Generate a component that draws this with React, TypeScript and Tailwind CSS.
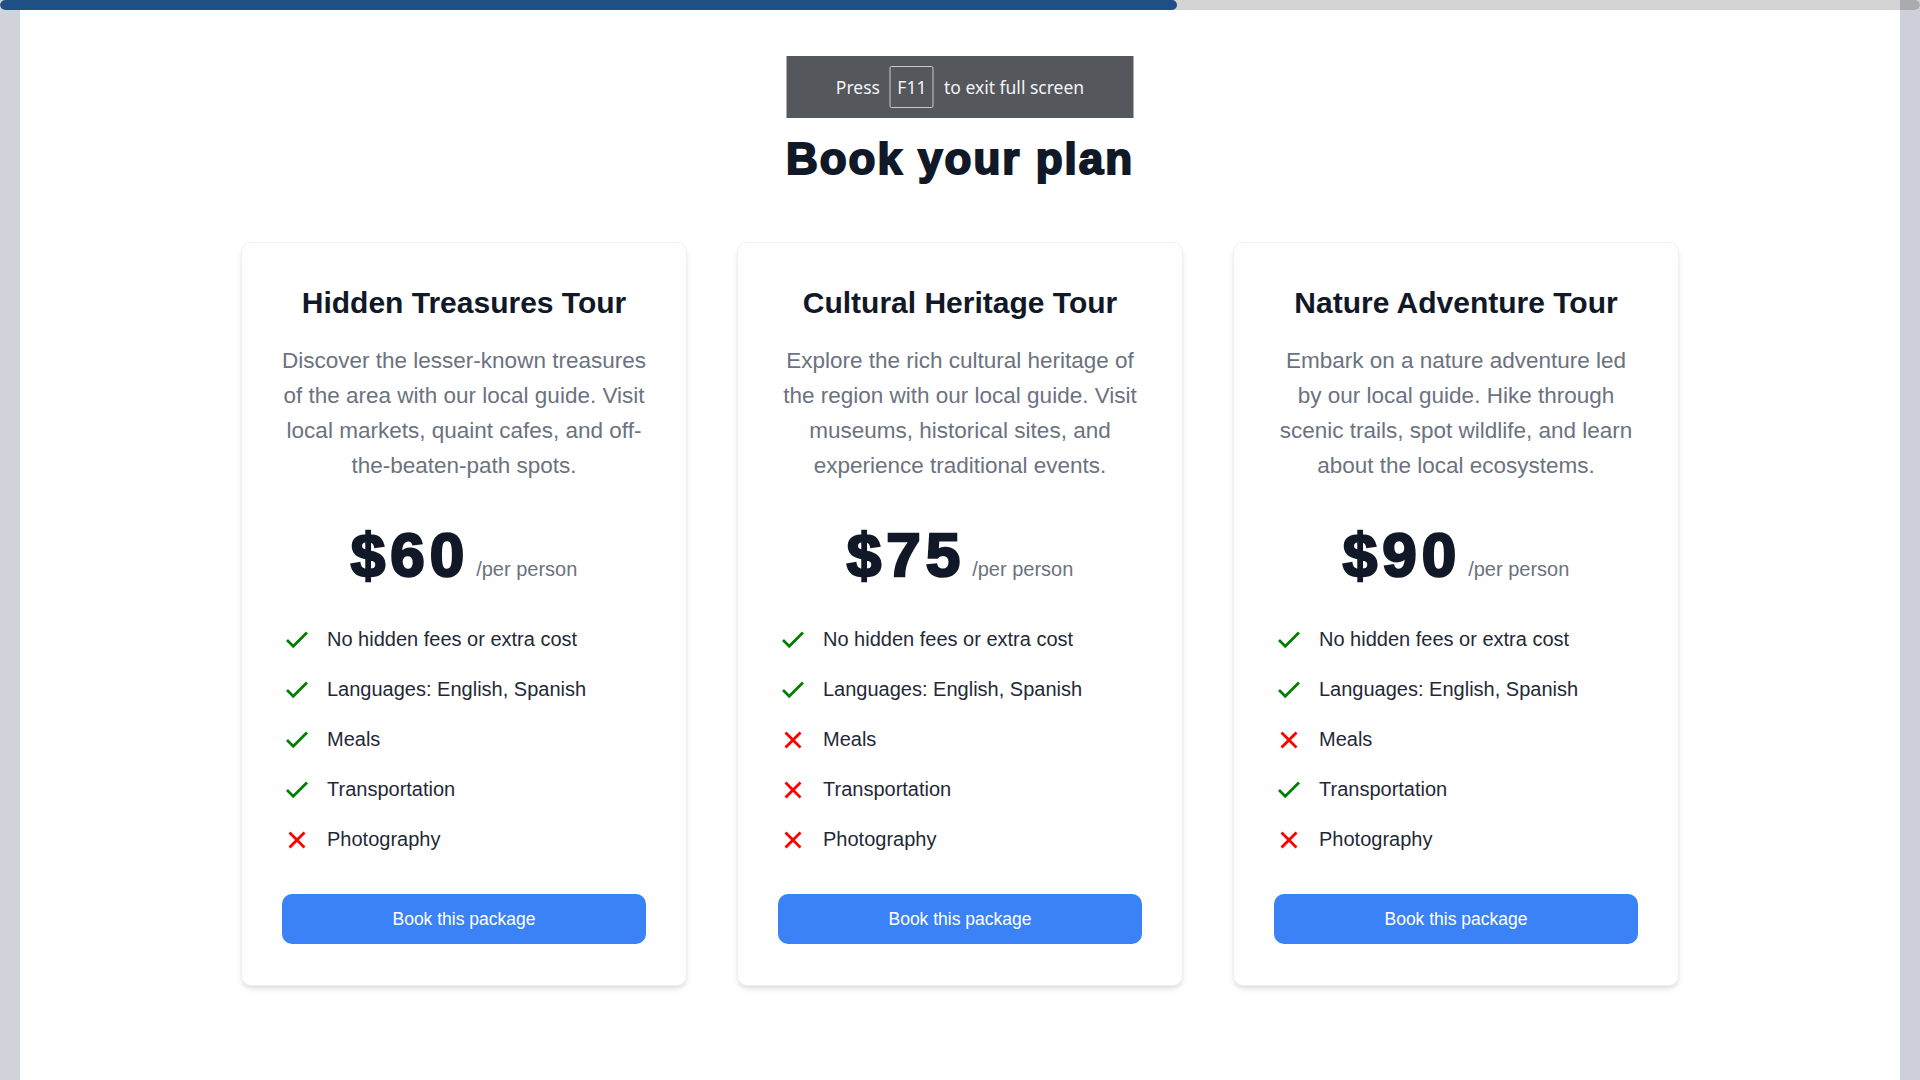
import React from "react";

type Feature = { label: string; ok: boolean };
type Plan = { title: string; desc: string; price: string; features: Feature[] };

const plans: Plan[] = [
  {
    title: "Hidden Treasures Tour",
    desc: "Discover the lesser-known treasures of the area with our local guide. Visit local markets, quaint cafes, and off-the-beaten-path spots.",
    price: "$60",
    features: [
      { label: "No hidden fees or extra cost", ok: true },
      { label: "Languages: English, Spanish", ok: true },
      { label: "Meals", ok: true },
      { label: "Transportation", ok: true },
      { label: "Photography", ok: false },
    ],
  },
  {
    title: "Cultural Heritage Tour",
    desc: "Explore the rich cultural heritage of the region with our local guide. Visit museums, historical sites, and experience traditional events.",
    price: "$75",
    features: [
      { label: "No hidden fees or extra cost", ok: true },
      { label: "Languages: English, Spanish", ok: true },
      { label: "Meals", ok: false },
      { label: "Transportation", ok: false },
      { label: "Photography", ok: false },
    ],
  },
  {
    title: "Nature Adventure Tour",
    desc: "Embark on a nature adventure led by our local guide. Hike through scenic trails, spot wildlife, and learn about the local ecosystems.",
    price: "$90",
    features: [
      { label: "No hidden fees or extra cost", ok: true },
      { label: "Languages: English, Spanish", ok: true },
      { label: "Meals", ok: false },
      { label: "Transportation", ok: true },
      { label: "Photography", ok: false },
    ],
  },
];

function CheckIcon() {
  return (
    <svg viewBox="0 0 24 24" className="w-[30px] h-[30px] shrink-0" fill="none" stroke="#008000" strokeWidth={2.2} strokeLinecap="butt" strokeLinejoin="miter">
      <path d="M20 6 9 17l-5-5" />
    </svg>
  );
}

function XIcon() {
  return (
    <svg viewBox="0 0 24 24" className="w-[30px] h-[30px] shrink-0" fill="none" stroke="#ff0000" strokeWidth={2.2} strokeLinecap="butt">
      <path d="M18 6 6 18" />
      <path d="m6 6 12 12" />
    </svg>
  );
}

function Card({ plan }: { plan: Plan }) {
  return (
    <div className="w-[446px] bg-white rounded-[10px] border border-[#f1f1f1] shadow-md p-[40px] flex flex-col">
      <h3 className="text-[30px] leading-[40px] font-bold text-[#111827] text-center">{plan.title}</h3>
      <p className="mt-[20px] text-[22.5px] leading-[35px] text-[#6b7280] text-center">{plan.desc}</p>
      <div className="mt-[42px] h-[60px] flex items-baseline justify-center">
        <span className="text-[62px] leading-[60px] font-bold text-[#111827] tracking-[5px] [-webkit-text-stroke:2.5px_#111827]">
          {plan.price}
        </span>
        <span className="ml-[7px] text-[20px] text-[#6b7280]">/per person</span>
      </div>
      <ul className="mt-[37px] flex flex-col gap-[15px]">
        {plan.features.map((f) => (
          <li key={f.label} className="flex items-center h-[35px] text-[20px] leading-[35px] text-[#1f2937]">
            {f.ok ? <CheckIcon /> : <XIcon />}
            <span className="ml-[15px]">{f.label}</span>
          </li>
        ))}
      </ul>
      <button className="mt-[37px] mb-[1px] h-[50px] w-full rounded-[10px] bg-[#3b82f6] text-white text-[17.5px]">
        Book this package
      </button>
    </div>
  );
}

export default function App() {
  return (
    <div className="relative w-full min-h-[1080px] flex bg-white font-['Liberation_Sans',Arial,sans-serif]">
      {/* top progress bar */}
      <div className="absolute top-0 left-0 right-0 h-[10px] z-20 rounded-full overflow-hidden bg-[#d4d4d4] flex">
        <div className="h-full w-[1177px] bg-[#1e4f85] rounded-full" />
        <div className="ml-auto h-full w-[20px] bg-[#a9abae] rounded-r-full" />
      </div>

      {/* left strip */}
      <div className="w-[20px] shrink-0 bg-[#d0d3da]" />

      {/* main */}
      <div className="relative flex-1 flex flex-col items-center pt-[137px]">
        {/* fullscreen notice overlay */}
        <div className="absolute top-[56px] left-1/2 -translate-x-1/2 w-[347px] h-[62px] bg-[#54575c] flex items-center justify-center text-[#f3f3f3] text-[17.5px] font-['Noto_Sans',sans-serif]">
          <span>Press</span>
          <span className="mx-[10px] w-[44px] h-[42px] border border-[#c9cacc] rounded-[2px] flex items-center justify-center">F11</span>
          <span>to exit full screen</span>
        </div>

        <h1 className="text-[44px] leading-[44px] font-bold text-[#111827] tracking-[2px] [-webkit-text-stroke:2px_#111827]">
          Book your plan
        </h1>

        <div className="mt-[61px] flex gap-[50px]">
          {plans.map((p) => (
            <Card key={p.title} plan={p} />
          ))}
        </div>
      </div>

      {/* right strip */}
      <div className="w-[20px] shrink-0 bg-[#cdd0d8]" />
    </div>
  );
}
